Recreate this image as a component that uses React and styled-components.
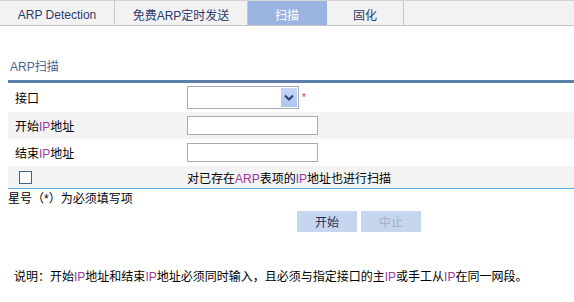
import React from "react";
import styled, { createGlobalStyle } from "styled-components";

const GlobalStyle = createGlobalStyle`
  body {
    margin: 0;
    background: #ffffff;
    font-family: "Liberation Sans", "Noto Sans CJK SC", sans-serif;
    font-size: 12px;
    color: #000000;
  }
`;
const Page = styled.div`
  width: 574px;
  height: 302px;
  overflow: hidden;
`;
const TabBar = styled.div`
  display: flex;
  height: 24px;
  background-color: #f2f2f2;
  border-top: 1px solid #d4d4d4;
  border-bottom: 1px solid #c4c4c4;
`;
const Tab = styled.div`
  width: ${(p) => p.$w}px;
  display: flex;
  align-items: center;
  justify-content: center;
  padding-top: 3px;
  box-sizing: border-box;
  color: ${(p) => (p.$active ? "#ffffff" : "#2b3b6e")};
  background-color: ${(p) => (p.$active ? "#9ab4e2" : "transparent")};
  border-right: 1px solid ${(p) => (p.$active ? "#9ab4e2" : "#c8c8c8")};
`;
const Section = styled.div`
  margin-top: 33px;
  padding-left: 8px;
`;
const Title = styled.div`
  color: #4d5f8e;
  line-height: 16px;
  padding: 0 0 5px 2px;
  border-bottom: 3px solid #5b7eaa;
`;
const Row = styled.div`
  display: flex;
  align-items: center;
  height: ${(p) => p.$h}px;
  background-color: ${(p) => (p.$gray ? "#f3f3f3" : "#ffffff")};
  border-bottom: ${(p) => (p.$last ? "1px solid #55a6dc" : "none")};
`;
const Label = styled.div`
  width: 172px;
  padding-left: 7px;
`;
const Ip = styled.span`
  color: #9b3a9b;
`;
const SelectBox = styled.div`
  width: 110px;
  height: 21px;
  border: 1px solid #a5acb2;
  display: flex;
  justify-content: flex-end;
  align-items: stretch;
  background: #ffffff;
`;
const Arrow = styled.div`
  width: 16px;
  margin: 1px;
  background: linear-gradient(#c8d6f8, #aec3f0);
  display: flex;
  align-items: center;
  justify-content: center;
`;
const Star = styled.span`
  color: #e03030;
  font-size: 10px;
  margin-left: 3px;
  align-self: center;
`;
const Input = styled.div`
  width: 129px;
  height: 17px;
  border: 1px solid #a5acb2;
  background: #ffffff;
`;
const CheckBox = styled.div`
  width: 11px;
  height: 11px;
  border: 1px solid #3f6286;
  background: #ffffff;
  margin-left: 11px;
`;
const CheckCell = styled.div`
  width: 179px;
  display: flex;
  align-items: center;
`;
const Hint = styled.div`
  padding-left: 8px;
  line-height: 18px;
  margin-top: 1px;
`;
const Buttons = styled.div`
  display: flex;
  gap: 4px;
  padding-left: 297px;
  margin-top: 3px;
`;
const Button = styled.div`
  width: 60px;
  height: 21px;
  display: flex;
  align-items: center;
  justify-content: center;
  background-color: #c6d6ef;
  color: ${(p) => (p.$disabled ? "#a4b0c6" : "#1f2f5c")};
`;
const Note = styled.div`
  margin-top: 37px;
  padding-left: 14px;
  line-height: 16px;
`;

const App = () => {
  return (
    <Page>
      <GlobalStyle />
      <TabBar>
        <Tab $w={115}>ARP Detection</Tab>
        <Tab $w={133}>免费ARP定时发送</Tab>
        <Tab $w={79} $active>
          扫描
        </Tab>
        <Tab $w={77}>固化</Tab>
      </TabBar>
      <Section>
        <Title>ARP扫描</Title>
        <Row $h={29}>
          <Label>接口</Label>
          <SelectBox>
            <Arrow>
              <svg width="10" height="7" viewBox="0 0 10 7">
                <path d="M1 1.5 L5 5.5 L9 1.5" fill="none" stroke="#2d3f6a" strokeWidth="2" />
              </svg>
            </Arrow>
          </SelectBox>
          <Star>*</Star>
        </Row>
        <Row $h={27} $gray>
          <Label>
            开始<Ip>IP</Ip>地址
          </Label>
          <Input />
        </Row>
        <Row $h={27}>
          <Label>
            结束<Ip>IP</Ip>地址
          </Label>
          <Input />
        </Row>
        <Row $h={22} $gray $last>
          <CheckCell>
            <CheckBox />
          </CheckCell>
          <span>
            对已存在<Ip>ARP</Ip>表项的<Ip>IP</Ip>地址也进行扫描
          </span>
        </Row>
      </Section>
      <Hint>星号（*）为必须填写项</Hint>
      <Buttons>
        <Button>开始</Button>
        <Button $disabled>中止</Button>
      </Buttons>
      <Note>
        说明：开始<Ip>IP</Ip>地址和结束<Ip>IP</Ip>地址必须同时输入，且必须与指定接口的主<Ip>IP</Ip>或手工从<Ip>IP</Ip>在同一网段。
      </Note>
    </Page>
  );
};
export default App;
